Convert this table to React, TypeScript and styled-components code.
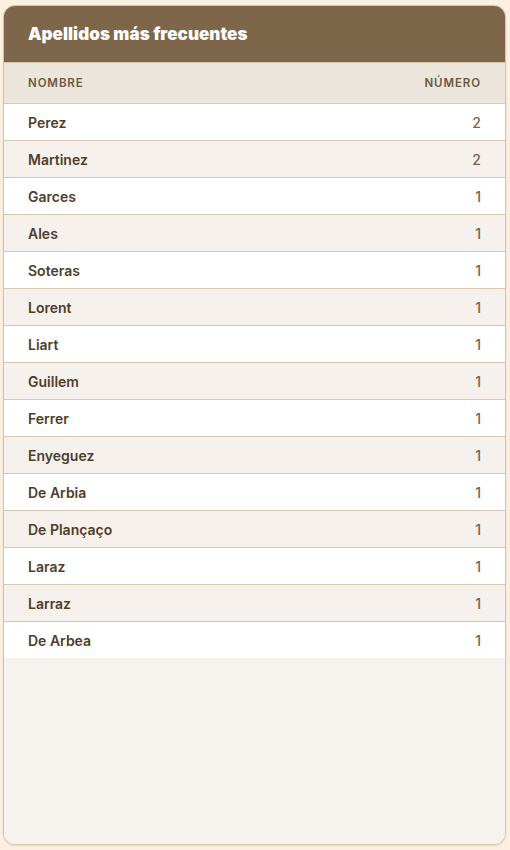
import React from "react";
import styled, { createGlobalStyle } from "styled-components";

const Global = createGlobalStyle`
  html, body { margin: 0; padding: 0; background: #fcf0e0; }
  body { font-family: Inter, "Noto Sans", sans-serif; }
`;

const Page = styled.div`
  padding: 5px 4px 5px 3px;
  height: 850px;
  box-sizing: border-box;
  display: flex;
`;

const Card = styled.div`
  flex: 1;
  display: flex;
  flex-direction: column;
  background: #f6f2ed;
  border: 1px solid #d6c3ab;
  border-radius: 12px;
  overflow: hidden;
  box-shadow: 0 1px 2px rgba(120, 90, 60, 0.15);
`;

const Header = styled.div`
  background: #7d6649;
  height: 56px;
  display: flex;
  align-items: center;
  padding: 0 24px;
  border-bottom: 1px solid #d6c3ab;
`;

const Title = styled.h2`
  margin: 0;
  color: #ffffff;
  font-family: Inter, sans-serif;
  font-size: 17px;
  font-weight: 900;
  letter-spacing: 0.05px;
`;

const Row = styled.div<{ $variant: "head" | "odd" | "even"; $last?: boolean }>`
  display: flex;
  justify-content: space-between;
  align-items: center;
  height: ${(p) => (p.$variant === "head" ? "40px" : "36px")};
  padding: 0 24px;
  border-bottom: ${(p) => (p.$last ? "none" : "1px solid #d9c7b1")};
  background: ${(p) =>
    p.$variant === "head" ? "#ece5dc" : p.$variant === "odd" ? "#ffffff" : "#f6f1ec"};
`;

const HeadCell = styled.span`
  font-size: 11.5px;
  font-weight: 600;
  letter-spacing: 0.9px;
  text-transform: uppercase;
  color: #6b5840;
`;

const NameCell = styled.span`
  font-size: 14px;
  font-weight: 600;
  color: #4e3e2c;
`;

const NumCell = styled.span`
  font-size: 14px;
  font-weight: 500;
  color: #7a6347;
`;

const Rest = styled.div`
  flex: 1;
  background: #f6f2ed;
`;

const data: [string, number][] = [
  ["Perez", 2],
  ["Martinez", 2],
  ["Garces", 1],
  ["Ales", 1],
  ["Soteras", 1],
  ["Lorent", 1],
  ["Liart", 1],
  ["Guillem", 1],
  ["Ferrer", 1],
  ["Enyeguez", 1],
  ["De Arbia", 1],
  ["De Plançaço", 1],
  ["Laraz", 1],
  ["Larraz", 1],
  ["De Arbea", 1],
];

export default function App() {
  return (
    <>
      <Global />
      <Page>
        <Card>
          <Header>
            <Title>Apellidos más frecuentes</Title>
          </Header>
          <Row $variant="head">
            <HeadCell>Nombre</HeadCell>
            <HeadCell>Número</HeadCell>
          </Row>
          {data.map(([n, c], i) => (
            <Row
              key={n}
              $variant={i % 2 === 0 ? "odd" : "even"}
              $last={i === data.length - 1}
            >
              <NameCell>{n}</NameCell>
              <NumCell>{c}</NumCell>
            </Row>
          ))}
          <Rest />
        </Card>
      </Page>
    </>
  );
}
